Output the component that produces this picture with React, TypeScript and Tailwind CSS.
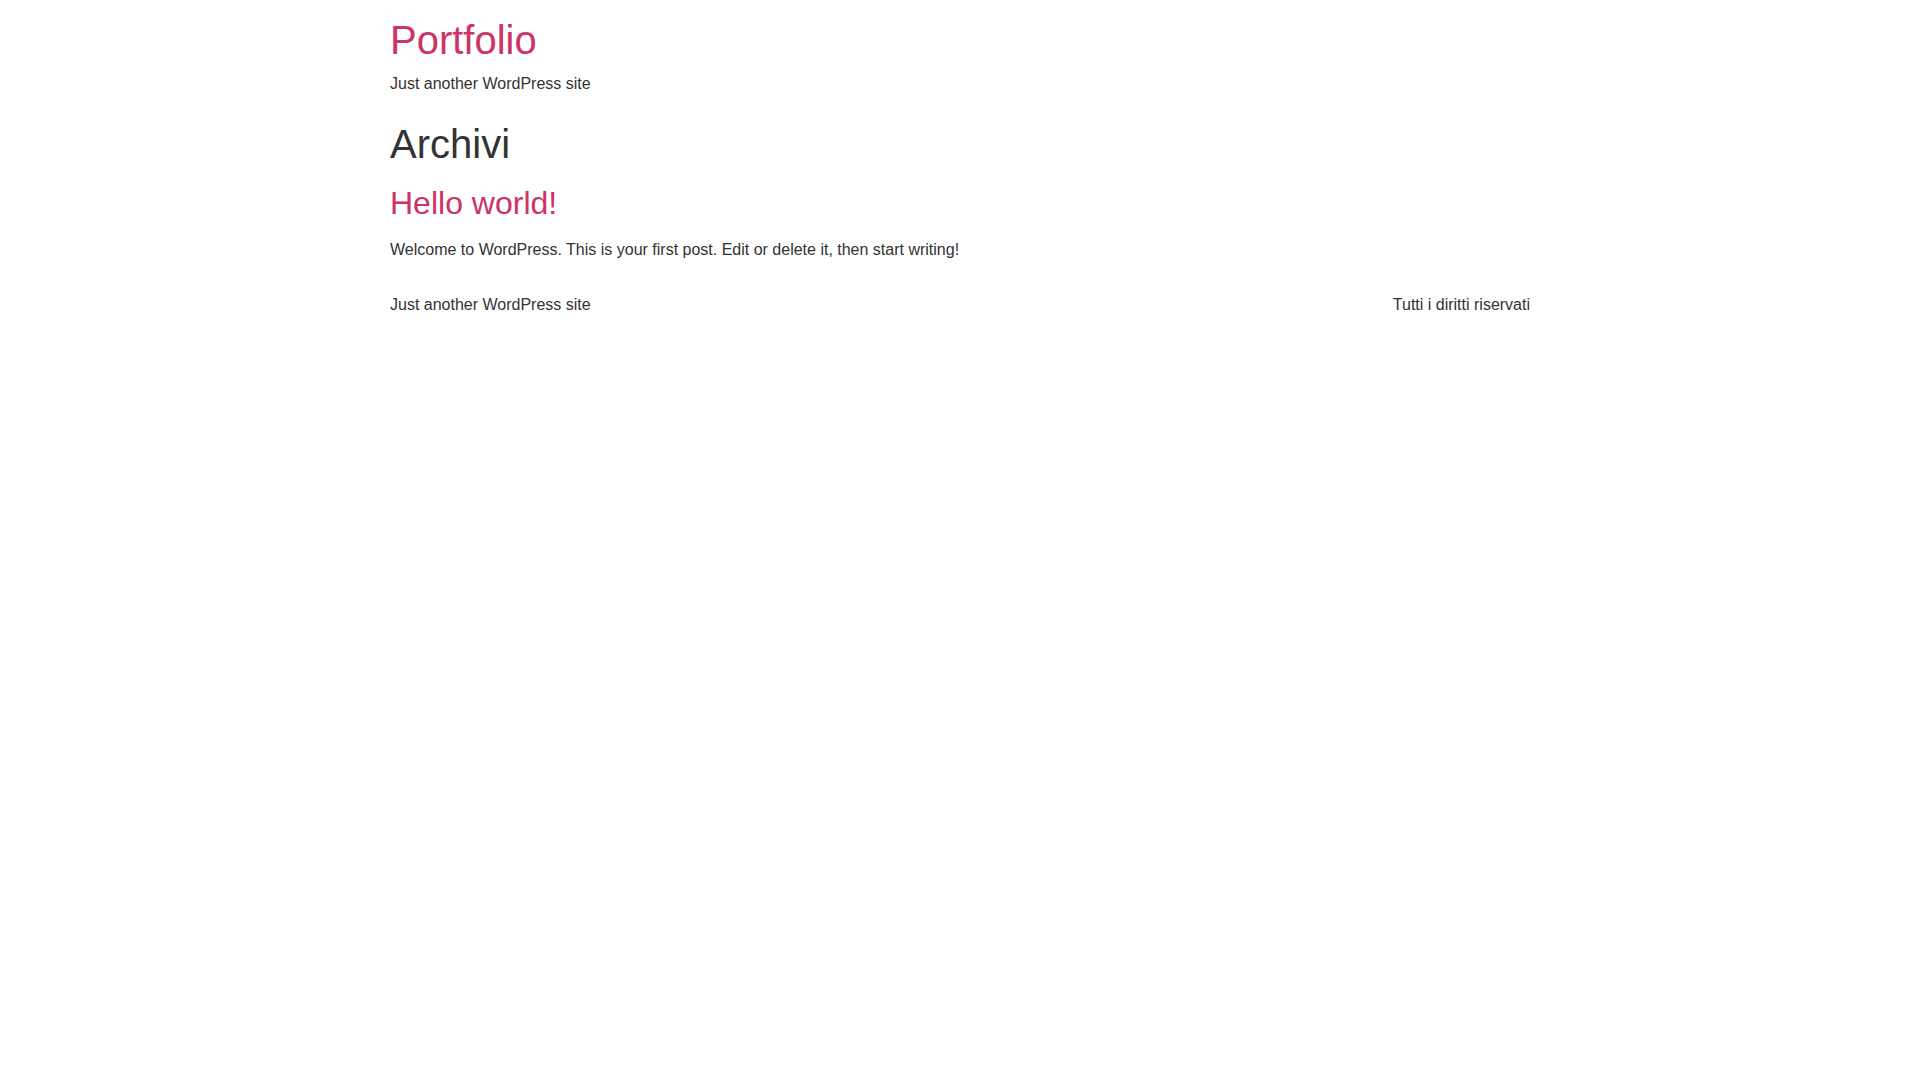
export default function App() {
  return (
    <div className="min-h-screen bg-white text-[#333333] text-[16px] leading-[1.5] font-['Liberation_Sans',Arial,sans-serif]">
      {/* Header */}
      <header className="mx-auto w-full max-w-[1140px] py-4 flex flex-col">
        <a href="#" className="text-[40px] leading-[1.2] text-[#cc3366]">
          Portfolio
        </a>
        <p className="mt-2">Just another WordPress site</p>
      </header>

      {/* Main */}
      <main className="mx-auto w-full max-w-[1140px]">
        <h1 className="mt-2 mb-4 text-[40px] leading-[1.2] font-medium">Archivi</h1>
        <article>
          <h2 className="mb-4 text-[32px] leading-[1.2] font-medium">
            <a href="#" className="text-[#cc3366]">
              Hello world!
            </a>
          </h2>
          <p className="mb-[14.4px]">
            Welcome to WordPress. This is your first post. Edit or delete it, then start writing!
          </p>
        </article>
      </main>

      {/* Footer */}
      <footer className="mx-auto w-full max-w-[1140px] py-4 flex justify-between">
        <p>Just another WordPress site</p>
        <p>Tutti i diritti riservati</p>
      </footer>
    </div>
  );
}
